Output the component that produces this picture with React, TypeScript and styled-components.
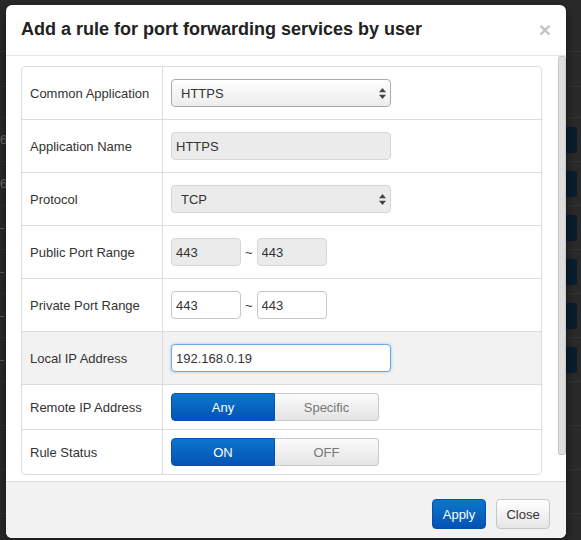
import React from "react";
import styled, { createGlobalStyle, css } from "styled-components";

const GlobalStyle = createGlobalStyle`
  html, body {
    margin: 0;
    padding: 0;
    width: 581px;
    height: 540px;
    overflow: hidden;
    background: #2a2a2a;
  }
  body {
    font-family: "Liberation Sans", Arial, Helvetica, sans-serif;
  }
  * { box-sizing: border-box; }
`;

/* ---------- background page (behind the dialog) ---------- */

const Page = styled.div`
  position: relative;
  width: 581px;
  height: 540px;
  overflow: hidden;
  background: #2a2a2a;
`;

const BgBar = styled.div<{ $h: number }>`
  height: ${(p) => p.$h}px;
  border-bottom: 1px solid #343434;
`;

const BgRow = styled.div`
  height: 44px;
  display: flex;
  align-items: center;
  justify-content: space-between;
  border-bottom: 1px solid #343434;
  color: #6a6a6a;
  font-size: 13px;
`;

const BgCellText = styled.span`
  margin-left: 0;
`;

const BgButton = styled.div`
  width: 60px;
  height: 26px;
  margin-right: 4px;
  border-radius: 3px;
  background: #0a1d2e;
`;

/* ---------- dialog ---------- */

const Modal = styled.div`
  position: absolute;
  left: 6px;
  top: 5px;
  width: 560px;
  height: 533px;
  display: flex;
  flex-direction: column;
  background: #fff;
  border-radius: 6px;
  overflow: hidden;
  box-shadow: 0 3px 12px rgba(0, 0, 0, 0.5);
`;

const Header = styled.div`
  flex: none;
  height: 51px;
  display: flex;
  align-items: center;
  justify-content: space-between;
  padding: 0 15px 2px 15px;
  border-bottom: 1px solid #e5e5e5;
`;

const Title = styled.h3`
  margin: 0;
  font-size: 18px;
  line-height: 20px;
  font-weight: bold;
  color: #222;
`;

const CloseX = styled.span`
  font-size: 21px;
  line-height: 1;
  font-weight: bold;
  color: #c4c4c4;
`;

const BodyArea = styled.div`
  flex: 1;
  min-height: 0;
  display: flex;
`;

const BodyContent = styled.div`
  flex: 1;
  overflow: hidden;
  padding: 10px 16px 0 15px;
`;

const ScrollTrack = styled.div`
  flex: none;
  width: 8px;
`;

const ScrollThumb = styled.div`
  height: 399px;
  background: #dedede;
  border: 1px solid #c8c8c8;
  border-radius: 2px;
`;

const Table = styled.div`
  border: 1px solid #ddd;
  border-radius: 4px;
  overflow: hidden;
`;

const Row = styled.div<{ $shaded?: boolean; $compact?: boolean }>`
  display: grid;
  grid-template-columns: 141px 1fr;
  height: ${(p) => (p.$compact ? 45 : 53)}px;
  border-top: 1px solid #ddd;
  background: ${(p) => (p.$shaded ? "#f2f2f2" : "transparent")};
  &:first-child {
    border-top: none;
    height: ${(p) => (p.$compact ? 44 : 52)}px;
  }
`;

const LabelCell = styled.div`
  display: flex;
  align-items: center;
  padding: 0 8px;
  border-right: 1px solid #ddd;
  font-size: 13px;
  color: #333;
`;

const FieldCell = styled.div`
  display: flex;
  align-items: center;
  padding: 0 8px;
`;

const SelectBox = styled.div<{ $disabled?: boolean }>`
  width: 220px;
  height: 28px;
  display: flex;
  align-items: center;
  justify-content: space-between;
  padding: 0 4px 0 9px;
  border-radius: 4px;
  font-size: 13px;
  color: #333;
  ${(p) =>
    p.$disabled
      ? css`
          background: #ebebeb;
          border: 1px solid #d3d3d3;
        `
      : css`
          background: linear-gradient(#fefefe, #ededed);
          border: 1px solid #ababab;
        `}
`;

const TextInput = styled.input<{ $width?: number; $disabled?: boolean; $focused?: boolean }>`
  width: ${(p) => p.$width ?? 220}px;
  height: 28px;
  padding: 0 4px;
  border-radius: 4px;
  font-family: "Liberation Sans", Arial, Helvetica, sans-serif;
  font-size: 13px;
  color: #333;
  outline: none;
  background: ${(p) => (p.$disabled ? "#ebebeb" : "#fff")};
  border: 1px solid ${(p) => (p.$focused ? "#6fa9dd" : p.$disabled ? "#d6d6d6" : "#c6c6c6")};
  box-shadow: ${(p) => (p.$focused ? "0 0 3px rgba(102, 175, 233, 0.7)" : "none")};
`;

const RangeWrap = styled.div`
  display: flex;
  align-items: center;
  gap: 4px;
  font-size: 13px;
  color: #333;
`;

const ToggleGroup = styled.div`
  display: inline-flex;
`;

const ToggleButton = styled.div<{ $active?: boolean }>`
  width: 104px;
  height: 28px;
  display: flex;
  align-items: center;
  justify-content: center;
  font-size: 13px;
  &:first-child {
    border-radius: 4px 0 0 4px;
  }
  &:last-child {
    border-radius: 0 4px 4px 0;
    border-left: none;
  }
  ${(p) =>
    p.$active
      ? css`
          color: #fff;
          background: linear-gradient(#0b77cc, #0452b5);
          border: 1px solid #0553b0;
        `
      : css`
          color: #777;
          background: linear-gradient(#fbfbfb, #e4e4e4);
          border: 1px solid #c9c9c9;
        `}
`;

const Footer = styled.div`
  flex: none;
  height: 57px;
  display: flex;
  justify-content: flex-end;
  align-items: flex-start;
  gap: 10px;
  padding: 17px 16px 0 0;
  border-top: 1px solid #ddd;
  background: #f2f2f2;
`;

const Button = styled.button<{ $primary?: boolean }>`
  height: 30px;
  width: 54px;
  padding: 0;
  border-radius: 4px;
  font-family: "Liberation Sans", Arial, Helvetica, sans-serif;
  font-size: 13px;
  cursor: pointer;
  ${(p) =>
    p.$primary
      ? css`
          color: #fff;
          background: linear-gradient(#0b77cc, #0452b5);
          border: 1px solid #0450a8;
        `
      : css`
          color: #333;
          background: linear-gradient(#ffffff, #e6e6e6);
          border: 1px solid #c6c6c6;
        `}
`;

const Arrows = () => (
  <svg width="7" height="11" viewBox="0 0 7 11" aria-hidden="true">
    <path d="M0 4.2 L3.5 0 L7 4.2 Z" fill="#444" />
    <path d="M0 6.8 L3.5 11 L7 6.8 Z" fill="#444" />
  </svg>
);

const bgRows = ["6", "6", "-", "-", "-", "-", "", "", "", ""];

export default function App() {
  return (
    <>
      <GlobalStyle />
      <Page>
        <BgBar $h={52} />
        <BgBar $h={35} />
        <BgBar $h={31} />
        {bgRows.map((t, i) => (
          <BgRow key={i}>
            <BgCellText>{t}</BgCellText>
            {i < 6 ? <BgButton /> : <span />}
          </BgRow>
        ))}

        <Modal role="dialog" aria-label="Add a rule for port forwarding services by user">
          <Header>
            <Title>Add a rule for port forwarding services by user</Title>
            <CloseX>×</CloseX>
          </Header>
          <BodyArea>
            <BodyContent>
              <Table>
                <Row>
                  <LabelCell>Common Application</LabelCell>
                  <FieldCell>
                    <SelectBox>
                      <span>HTTPS</span>
                      <Arrows />
                    </SelectBox>
                  </FieldCell>
                </Row>
                <Row>
                  <LabelCell>Application Name</LabelCell>
                  <FieldCell>
                    <TextInput $disabled readOnly defaultValue="HTTPS" />
                  </FieldCell>
                </Row>
                <Row>
                  <LabelCell>Protocol</LabelCell>
                  <FieldCell>
                    <SelectBox $disabled>
                      <span>TCP</span>
                      <Arrows />
                    </SelectBox>
                  </FieldCell>
                </Row>
                <Row>
                  <LabelCell>Public Port Range</LabelCell>
                  <FieldCell>
                    <RangeWrap>
                      <TextInput $width={70} $disabled readOnly defaultValue="443" />
                      <span>~</span>
                      <TextInput $width={70} $disabled readOnly defaultValue="443" />
                    </RangeWrap>
                  </FieldCell>
                </Row>
                <Row>
                  <LabelCell>Private Port Range</LabelCell>
                  <FieldCell>
                    <RangeWrap>
                      <TextInput $width={70} readOnly defaultValue="443" />
                      <span>~</span>
                      <TextInput $width={70} readOnly defaultValue="443" />
                    </RangeWrap>
                  </FieldCell>
                </Row>
                <Row $shaded>
                  <LabelCell>Local IP Address</LabelCell>
                  <FieldCell>
                    <TextInput $focused readOnly defaultValue="192.168.0.19" />
                  </FieldCell>
                </Row>
                <Row $compact>
                  <LabelCell>Remote IP Address</LabelCell>
                  <FieldCell>
                    <ToggleGroup>
                      <ToggleButton $active>Any</ToggleButton>
                      <ToggleButton>Specific</ToggleButton>
                    </ToggleGroup>
                  </FieldCell>
                </Row>
                <Row $compact>
                  <LabelCell>Rule Status</LabelCell>
                  <FieldCell>
                    <ToggleGroup>
                      <ToggleButton $active>ON</ToggleButton>
                      <ToggleButton>OFF</ToggleButton>
                    </ToggleGroup>
                  </FieldCell>
                </Row>
              </Table>
            </BodyContent>
            <ScrollTrack>
              <ScrollThumb />
            </ScrollTrack>
          </BodyArea>
          <Footer>
            <Button $primary>Apply</Button>
            <Button>Close</Button>
          </Footer>
        </Modal>
      </Page>
    </>
  );
}
